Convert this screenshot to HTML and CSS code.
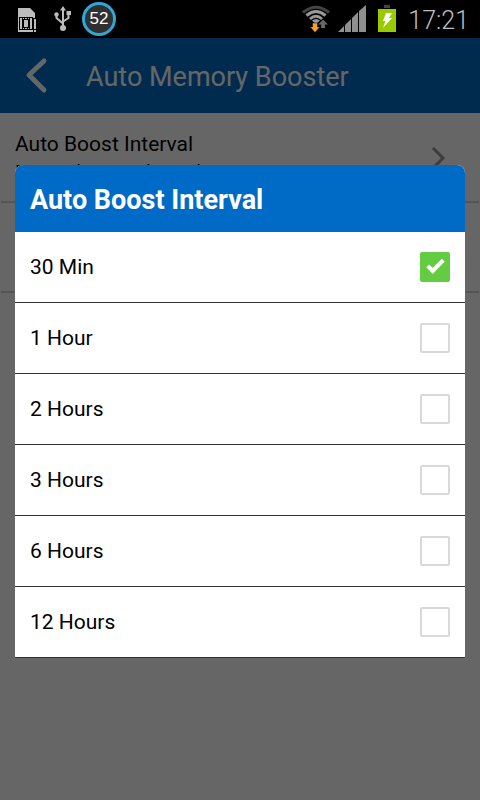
FILE: index.html
```
<!DOCTYPE html>
<html lang="en">
<head>
    <meta charset="UTF-8">
    <meta name="viewport" content="width=device-width, initial-scale=1.0">
    <title>Auto Memory Booster</title>
    <link rel="stylesheet" href="styles.css">
</head>
<body>
    <div class="status-bar">
        <svg class="sim-icon" width="20" height="26" viewBox="0 0 20 26">
            <path d="M0 1H12L17 6V25H0Z" fill="#bdbdbd"/>
            <path d="M1 10H15V23H1Z" fill="#000"/>
            <path d="M2 11H4V22H2ZM12 11H14V22H12ZM6 13H10V20H6ZM5 11H6V12H5ZM7 11H9V12H7ZM10 11H11V12H10ZM5 21H6V22H5ZM7 21H9V22H7ZM10 21H11V22H10Z" fill="#bdbdbd"/>
            <path d="M15 11H19V26H15Z" fill="#000"/>
            <path d="M16 12H18V22H16ZM16 23H18V25H16Z" fill="#bdbdbd"/>
        </svg>
        <svg class="usb-icon" width="18" height="26" viewBox="0 0 18 26">
            <g fill="none" stroke="#bdbdbd" stroke-width="2">
                <path d="M9 3V22"/>
                <path d="M2.500 9V12L9 17.500"/>
                <path d="M14.500 8V12L9 15.500"/>
            </g>
            <path d="M9 0L12 4.500H6Z" fill="#bdbdbd"/>
            <circle cx="2.500" cy="8.500" r="2.200" fill="#bdbdbd"/>
            <path d="M12.500 5H17V9H12.500Z" fill="#bdbdbd"/>
            <circle cx="9" cy="22" r="3" fill="#bdbdbd"/>
        </svg>
        <span class="battery-level">52</span>
        <svg class="wifi-icon" width="28" height="28" viewBox="0 0 28 28">
            <g fill="none" stroke-width="3">
                <path d="M1 7.500Q14 -3 27 7.500" stroke="#444"/>
                <path d="M4.500 10.500Q14 2.500 23.500 10.500" stroke="#999"/>
                <path d="M8 14Q14 8.500 20 14" stroke="#999"/>
            </g>
            <path d="M10 15.500Q14 12.500 18 15.500L14 19Z" fill="#999"/>
            <path d="M10.500 18H15.500V22H18L13 27.500L8 22H10.500Z" fill="#f9a02b" stroke="#000" stroke-width=".5"/>
            <path d="M21 14.500L26 19.500H23V23H19V19.500H16Z" fill="#666"/>
        </svg>
        <svg class="signal-icon" width="28" height="28" viewBox="0 0 28 28">
            <path d="M0 27L6 21V27ZM7 20L13 14V27H7ZM14 13L20 7V27H14ZM21 6L28 0V27H21Z" fill="#8f8f8f"/>
        </svg>
        <svg class="charge-icon" width="18" height="28" viewBox="0 0 18 28">
            <path d="M6 0H12V3H6Z" fill="#444"/>
            <path d="M0 4H18V27H0Z" fill="#99cc00"/>
            <path d="M8 8H14L11 13H14L5 23L7.500 16H5Z" fill="#fff"/>
        </svg>
        <span class="clock">17:21</span>
    </div>

    <div class="screen">
        <header class="title-bar">
            <button class="back-btn" type="button" aria-label="Back">
                <svg width="24" height="38" viewBox="0 0 24 38">
                    <path d="M20 4L5 18L20 33" fill="none" stroke="#fff" stroke-width="5" stroke-linecap="round" stroke-linejoin="round"/>
                </svg>
            </button>
            <h1>Auto Memory Booster</h1>
        </header>

        <main class="settings">
            <a class="setting" href="#interval-dialog">
                <span class="setting-text">
                    <span class="setting-name">Auto Boost Interval</span>
                    <span class="setting-info">Boost phone and save battery</span>
                </span>
                <svg width="16" height="24" viewBox="0 0 16 24">
                    <path d="M3 3L13 13L3 23" fill="none" stroke="#999" stroke-width="3"/>
                </svg>
            </a>
            <div class="setting"></div>
        </main>

        <div class="overlay">
            <form class="dialog" id="interval-dialog">
                <h2>Auto Boost Interval</h2>
                <label class="option">30 Min <input type="checkbox" name="interval" value="30" checked></label>
                <label class="option">1 Hour <input type="checkbox" name="interval" value="60"></label>
                <label class="option">2 Hours <input type="checkbox" name="interval" value="120"></label>
                <label class="option">3 Hours <input type="checkbox" name="interval" value="180"></label>
                <label class="option">6 Hours <input type="checkbox" name="interval" value="360"></label>
                <label class="option">12 Hours <input type="checkbox" name="interval" value="720"></label>
            </form>
        </div>
    </div>
</body>
</html>
```
FILE: styles.css
```
* {
    box-sizing: border-box;
}

body {
    margin: 0;
    min-height: 100vh;
    display: flex;
    flex-direction: column;
    font-family: Roboto, sans-serif;
    background-color: white;
}

/* Status Bar */
.status-bar {
    display: flex;
    align-items: center;
    height: 38px;
    padding: 0 11px 0 18px;
    background-color: black;
}

.sim-icon {
    margin-top: 2px;
}

.usb-icon {
    margin-left: 16px;
}

.battery-level {
    display: flex;
    align-items: center;
    justify-content: center;
    width: 34px;
    height: 34px;
    margin-left: 10px;
    border: 3px solid #2fa8d8;
    border-radius: 50%;
    background-color: #303030;
    color: white;
    font-family: "Liberation Sans", sans-serif;
    font-size: 17px;
}

.wifi-icon {
    margin-left: auto;
}

.signal-icon {
    margin-left: 8px;
}

.charge-icon {
    margin-left: 12px;
}

.clock {
    margin-left: 12px;
    padding-top: 2px;
    color: #bebebe;
    font-size: 25px;
    font-weight: 300;
}

/* Screen under the status bar */
.screen {
    position: relative;
    flex: 1;
}

.title-bar {
    display: flex;
    align-items: center;
    height: 75px;
    padding-left: 24px;
    background-color: #006bc6;
    color: white;
}

.title-bar h1 {
    margin: 0 0 0 38px;
    padding-top: 2px;
    font-size: 27px;
    font-weight: 400;
}

.back-btn {
    display: flex;
    padding: 0;
    border: none;
    background: none;
}

/* Settings List */
.setting {
    display: flex;
    align-items: center;
    justify-content: space-between;
    height: 90px;
    margin: 0 1px;
    padding: 0 33px 0 14px;
    border-bottom: 2px solid #d5d5d5;
    color: black;
    text-decoration: none;
}

.setting-text {
    display: flex;
    flex-direction: column;
    gap: 4px;
}

.setting-name {
    font-size: 21px;
    line-height: 26px;
}

.setting-info {
    font-size: 18px;
    line-height: 22px;
}

/* Interval Dialog */
.overlay {
    position: absolute;
    inset: 0;
    display: flex;
    align-items: center;
    padding: 0 15px 15px;
    background-color: rgba(0, 0, 0, 0.6);
}

.dialog {
    width: 100%;
    border-radius: 8px 8px 0 0;
    overflow: hidden;
    background-color: white;
}

.dialog h2 {
    margin: 0;
    padding: 4px 15px 0;
    background-color: #006bc6;
    color: white;
    font-size: 27px;
    line-height: 63px;
}

.option {
    display: flex;
    align-items: center;
    justify-content: space-between;
    height: 71px;
    padding: 0 15px;
    border-bottom: 1px solid #333;
    font-size: 21px;
}

.option input {
    position: relative;
    appearance: none;
    width: 30px;
    height: 30px;
    margin: 0;
    border: 2px solid #d9d9d9;
    border-radius: 2px;
}

.option input:checked {
    border-color: #64cc42;
    background-color: #64cc42;
}

/* Tick mark */
.option input:checked::after {
    content: "";
    position: absolute;
    left: 9px;
    top: 2px;
    width: 9px;
    height: 17px;
    box-sizing: border-box;
    border: solid white;
    border-width: 0 4px 4px 0;
    transform: rotate(45deg);
}
```
